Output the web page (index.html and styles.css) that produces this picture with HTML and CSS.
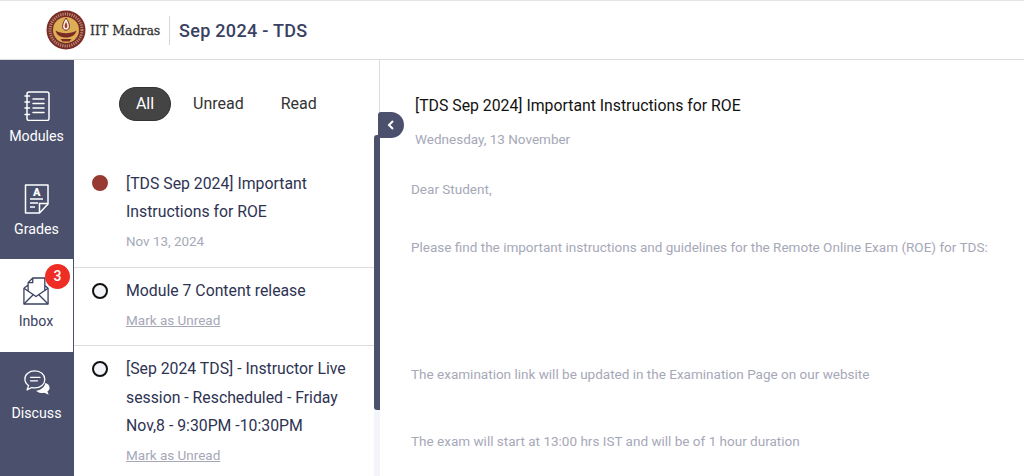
FILE: index.html
```html
<!DOCTYPE html>
<html lang="en">
<head>
<meta charset="utf-8">
<title>Inbox</title>
<link rel="stylesheet" href="styles.css">
</head>
<body>
<header class="topbar">
  <svg class="logo" viewBox="0 0 40 40" aria-hidden="true">
    <circle cx="20" cy="20" r="19.500" fill="#7c2a26"/>
    <circle cx="20" cy="20" r="16" fill="none" stroke="#d9c9a8" stroke-width="3" stroke-dasharray="1.200 1.100" opacity=".6"/>
    <circle cx="20" cy="20" r="13" fill="#dcae55"/>
    <path d="M20 8c2.600 3.600 3.400 6.400 3.400 8.600 0 2.200-1.400 3.600-3.400 3.600s-3.400-1.400-3.400-3.600c0-2.200.8-5 3.400-8.600z" fill="#f6efe2" stroke="#7c2a26" stroke-width="1"/>
    <path d="M20 12c1 1.600 1.300 3 1.300 4.200 0 1-.5 1.800-1.300 1.800s-1.300-.8-1.300-1.800c0-1.200.3-2.600 1.300-4.200z" fill="#a83a2c"/>
    <path d="M9.500 20.500c1 4.500 5 7 10.500 7s9.500-2.500 10.500-7c-3 1.800-6.500 2.800-10.500 2.800s-7.500-1-10.500-2.800z" fill="#7c2a26"/>
    <path d="M14.500 29h11l-2 2.500h-7z" fill="#7c2a26"/>
  </svg>
  <span class="brand">IIT Madras</span>
  <span class="course">Sep 2024 - TDS</span>
</header>
<div class="shell">
  <nav class="rail">
    <a class="rail-item">
      <svg class="rail-icon" viewBox="0 0 26 30" fill="none" stroke="currentColor" stroke-width="1.500" aria-hidden="true">
        <rect x="3" y="1" width="22" height="28.500" rx="2"/>
        <path d="M9 8h11M9 12.500h11M9 17h11M9 21.500h11M1 5h4.500M1 11h4.500M1 17h4.500M1 23.500h4.500" stroke-linecap="round"/>
      </svg>
      <span>Modules</span>
    </a>
    <a class="rail-item">
      <svg class="rail-icon" viewBox="0 0 26 30" fill="none" stroke="currentColor" stroke-width="1.500" aria-hidden="true">
        <path d="M1.500 1h22.500v19l-8.500 9H1.500z" stroke-linejoin="round"/>
        <path d="M15.500 29v-9.500H24M6 15h13M6 19h8M6 23h5"/>
        <text class="grade-letter" x="12.800" y="11.500">A</text>
      </svg>
      <span>Grades</span>
    </a>
    <a class="rail-item rail-item-active">
      <svg class="rail-icon" viewBox="0 0 28 30" fill="none" stroke="currentColor" stroke-width="1.400" aria-hidden="true">
        <path d="M1 12v17h26V12M5.500 15V6l5-5h13v14M1 12l4.500-3.500M27 12l-3.500-3" stroke-linejoin="round"/>
        <path d="M5.500 6h5V1M1 12l13 9 13-9M1 29l10.500-10.500M27 29L16.500 18.500" stroke-linejoin="round"/>
      </svg>
      <span>Inbox</span>
      <b class="badge">3</b>
    </a>
    <a class="rail-item">
      <svg class="rail-icon" viewBox="0 0 30 30" aria-hidden="true">
        <path d="M24.500 15c3.500.8 5 3 5 5.500 0 1.800-1 3.400-2.500 4.400l1.500 3.600-5-2.300c-3.500.8-7.500-.3-9.500-2.400 5-.2 10-3.800 10.500-8.800z" fill="currentColor"/>
        <path d="M12.500 1C6 1 1 5 1 10.500c0 3.200 1.700 5.800 4.300 7.500L3.500 23l5.500-2.800c1.100.3 2.300.5 3.500.5 6.500 0 11.500-4.200 11.500-9.800S19 1 12.500 1z" fill="none" stroke="currentColor" stroke-width="1.500" stroke-linejoin="round"/>
        <path d="M7.500 8.500h11M7.500 12.500h8" fill="none" stroke="currentColor" stroke-width="1.500" stroke-linecap="round"/>
      </svg>
      <span>Discuss</span>
    </a>
  </nav>
  <section class="list-panel">
    <div class="filters">
      <button class="filter filter-active">All</button>
      <button class="filter">Unread</button>
      <button class="filter">Read</button>
    </div>
    <ul class="messages">
      <li class="message message-first">
        <i class="dot dot-current"></i>
        <div class="message-body">
          <p class="message-title">[TDS Sep 2024] Important Instructions for ROE</p>
          <p class="message-date">Nov 13, 2024</p>
        </div>
      </li>
      <li class="message">
        <i class="dot"></i>
        <div class="message-body">
          <p class="message-title">Module 7 Content release</p>
          <a class="mark">Mark as Unread</a>
        </div>
      </li>
      <li class="message">
        <i class="dot"></i>
        <div class="message-body">
          <p class="message-title">[Sep 2024 TDS] - Instructor Live session - Rescheduled - Friday Nov,8 - 9:30PM -10:30PM</p>
          <a class="mark">Mark as Unread</a>
        </div>
      </li>
    </ul>
    <div class="scrollbar"><span class="scrollbar-thumb"></span></div>
    <button class="collapse" aria-label="Collapse">
      <svg viewBox="0 0 8 10" aria-hidden="true"><path d="M6 1L2 5l4 4" fill="none" stroke="currentColor" stroke-width="2"/></svg>
    </button>
  </section>
  <main class="detail">
    <h1 class="detail-title">[TDS Sep 2024] Important Instructions for ROE</h1>
    <p class="detail-date">Wednesday, 13 November</p>
    <div class="detail-text">
      <p class="para-greeting">Dear Student,</p>
      <p class="para-intro">Please find the important instructions and guidelines for the Remote Online Exam (ROE) for TDS:</p>
      <p class="para-link">The examination link will be updated in the Examination Page on our website</p>
      <p class="para-time">The exam will start at 13:00 hrs IST and will be of 1 hour duration</p>
    </div>
  </main>
</div>
</body>
</html>
```

FILE: styles.css
```css
* { box-sizing: border-box; }
html, body { margin: 0; height: 100%; overflow: hidden; }
body { font-family: Roboto, "Liberation Sans", sans-serif; background: #fff; color: #2e3352; }
p, ul, h1 { margin: 0; padding: 0; }

.topbar {
  height: 60px;
  border-top: 1px solid #e4e4e4;
  border-bottom: 1px solid #dcdcdc;
  display: flex;
  align-items: center;
  padding-left: 46px;
}
.logo { width: 40px; height: 40px; flex: none; }
.brand {
  font-family: "DejaVu Serif", serif;
  font-size: 12.500px;
  color: #333;
  -webkit-text-stroke: .3px #333;
  margin-left: 4px;
  width: 79px;
  white-space: nowrap;
}
.course {
  border-left: 1px solid #d5d7df;
  height: 29px;
  line-height: 29px;
  padding-left: 9px;
  font-size: 18px;
  font-weight: 500;
  color: #3a4160;
  letter-spacing: .3px;
}

.shell { display: flex; height: 416px; }

.rail { width: 74px; flex: none; background: #4b506d; color: #fff; display: flex; flex-direction: column; }
.rail-item {
  position: relative;
  height: 92px;
  display: flex;
  flex-direction: column;
  align-items: center;
  padding-right: 1px;
  font-size: 14.200px;
  line-height: 18px;
}
.rail-item:first-child { height: 107px; padding-top: 31px; }
.rail-item:nth-child(2) { height: 92px; padding-top: 17px; }
.rail-item-active { background: #fff; color: #3a4160; padding-top: 17px; height: 93px; border-right: 1px solid #4b506d; }
.rail-item:last-child { padding-top: 16px; }
.rail-icon { width: 26px; height: 30px; margin-bottom: 6px; }
.badge {
  position: absolute;
  top: 5px;
  left: 45px;
  width: 25px;
  height: 25px;
  border-radius: 50%;
  background: #ee2e24;
  color: #fff;
  font-weight: 500;
  font-size: 14px;
  line-height: 25px;
  text-align: center;
}
.grade-letter { font-family: Roboto, sans-serif; font-size: 11px; font-weight: 900; fill: currentColor; stroke: none; text-anchor: middle; }

.list-panel { position: relative; width: 306px; flex: none; border-right: 1px solid #dcdcdc; }
.filters { display: flex; align-items: center; height: 34px; margin-top: 27px; padding-left: 45px; }
.filter {
  border: 0;
  background: none;
  font: inherit;
  font-size: 16px;
  color: #333;
  height: 34px;
  padding: 0 0 2px;
}
.filter:nth-child(2) { margin-left: 22px; }
.filter:nth-child(3) { margin-left: 37px; }
.filter-active { width: 52px; border-radius: 17px; background: #444; color: #fff; border: 1px solid #333; }

.messages { list-style: none; margin-top: 39px; }
.message { display: flex; padding: 9px 24px 0 18px; border-bottom: 1px solid #dcdcdc; height: 78px; }
.message-first { height: 108px; }
.message-first .message-body { padding-top: 1px; }
.message-first .message-title { line-height: 28px; }
.message-first .message-date { margin-top: 1px; }
.message:last-child { height: 132px; border-bottom: 0; }
.dot { flex: none; width: 16px; height: 16px; margin-top: 6px; border: 2px solid #111; border-radius: 50%; background: #f3f4f8; }
.dot-current { background: #963a32; border-color: #963a32; }
.message-body { margin-left: 18px; min-width: 0; }
.message-title { font-size: 15.800px; line-height: 28.500px; color: #2e3352; }
.message-date { font-size: 13.400px; line-height: 30px; color: #a6a8b8; }
.mark { display: block; font-size: 13.500px; line-height: 30px; margin-top: -1px; color: #a6a8b8; text-decoration: underline; }

.scrollbar { position: absolute; top: 75px; bottom: 0; right: -1px; width: 6px; background: #f4f5fa; }
.scrollbar-thumb { display: block; height: 275px; background: #4b506d; border-radius: 3px 0 0 3px; }
.collapse {
  position: absolute;
  top: 52px;
  left: 304px;
  width: 26px;
  height: 26px;
  padding: 0;
  border: 0;
  border-radius: 3px 13px 13px 3px;
  background: #4b506d;
  color: #fff;
  display: flex;
  align-items: center;
  justify-content: center;
}
.collapse svg { width: 8px; height: 10px; }

.detail { flex: 1; min-width: 0; padding: 35px 24px 0 31px; overflow: hidden; }
.detail-title { font-size: 15.800px; font-weight: 400; line-height: 22px; color: #111; padding-left: 4px; }
.detail-date { font-size: 13.500px; line-height: 20px; margin-top: 12px; color: #a6a8b8; padding-left: 4px; }
.detail-text { font-size: 13.520px; line-height: 20px; color: #a6a8b8; }
.para-greeting { margin-top: 30px; }
.para-intro { margin-top: 38px; }
.para-link { margin-top: 107px; }
.para-time { margin-top: 47px; }
```
